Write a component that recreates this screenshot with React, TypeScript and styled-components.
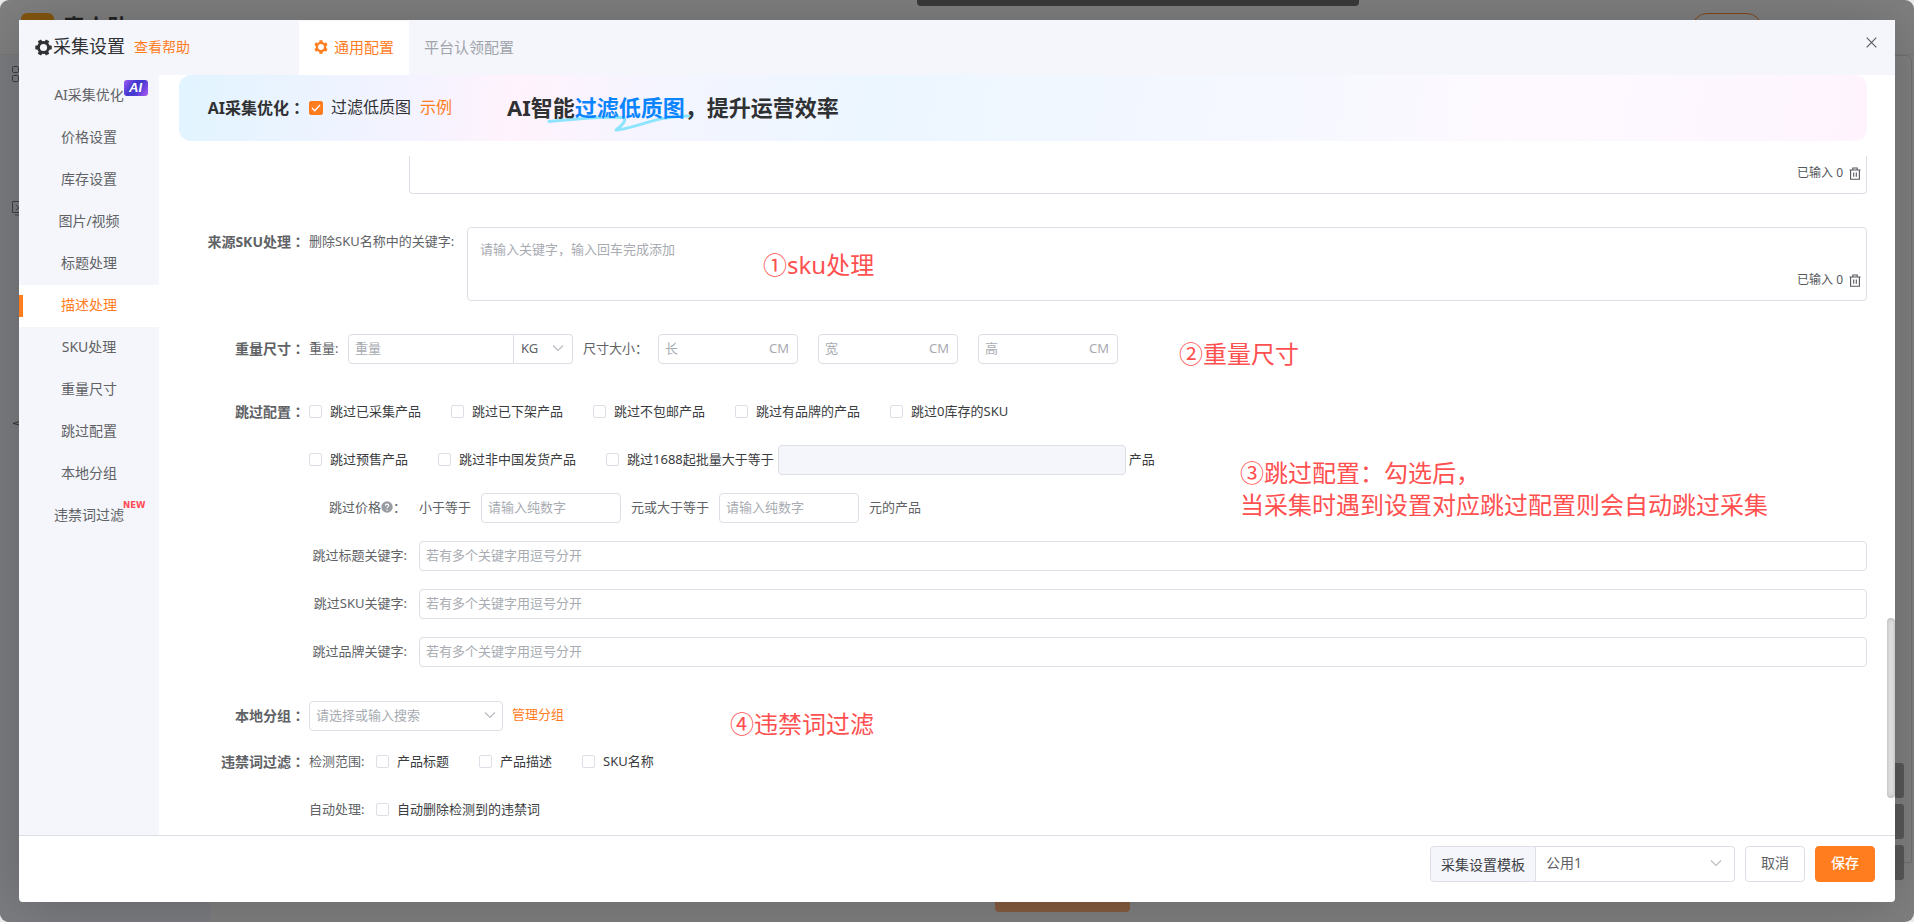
import React from "react";
import styled, { createGlobalStyle, css } from "styled-components";

const orange = "#ff7d1f";
const line = "#dcdfe6";
const pale = "#f5f6fb";
const muted = "#a8abb2";

const GlobalStyle = createGlobalStyle`
  *, *::before, *::after { box-sizing: border-box; }
  html, body, #root { height: 100%; }
  body {
    margin: 0;
    overflow: hidden;
    background: #e9e9e9;
    color: #606266;
    font: 13px/20px "Noto Sans", "Noto Sans CJK SC", sans-serif;
    white-space: nowrap;
  }
`;

/* dimmed page below the dialog */

const Page = styled.div`
  position: relative;
  height: 100%;
  border-radius: 9px;
  overflow: hidden;
  background: #7f7f7f;
  display: flex;
  flex-direction: column;
`;

const PageHeader = styled.header`
  height: 55px;
  display: flex;
  align-items: flex-start;
  padding: 13px 152px 0 21px;
  border-bottom: 1px solid #787878;
`;

const PageLogo = styled.div`
  width: 33px;
  height: 33px;
  border-radius: 6px;
  background: #84560f;
`;

const PageName = styled.b`
  margin-left: 9px;
  font-size: 22px;
  line-height: 26px;
  color: #222;
`;

const PageNav = styled.span`
  margin-left: 49px;
  display: flex;
  gap: 32px;
  font-size: 16px;
  line-height: 26px;
  padding-top: 2px;
  color: #333;
`;

const PagePill = styled.span`
  margin-left: auto;
  width: 70px;
  height: 30px;
  border: 1px solid #854618;
  border-radius: 15px;
`;

const PageBody = styled.div`
  flex: 1;
  display: flex;
`;

const PageAside = styled.aside`
  width: 210px;
  background: #7b7c7f;
  padding: 11px 0 0 12px;
  display: flex;
  flex-direction: column;
  align-items: flex-start;
`;

const PageGlyph = styled.svg<{ $gap?: number }>`
  display: block;
  margin-top: ${(p) => p.$gap ?? 0}px;
`;

const PageMain = styled.main`
  flex: 1;
  height: 808px;
  margin-right: 2px;
  border: 1px solid #717174;
  border-top-right-radius: 6px;
`;

const TopToast = styled.div`
  position: absolute;
  top: 0;
  left: 917px;
  width: 442px;
  height: 6px;
  border-radius: 0 0 4px 4px;
  background: #3a3a3a;
`;

const BottomAction = styled.div`
  position: absolute;
  bottom: 10px;
  left: 995px;
  width: 135px;
  height: 30px;
  border-radius: 4px;
  background: #845c3f;
`;

const SideTools = styled.div`
  position: absolute;
  right: 10px;
  bottom: 42px;
  display: flex;
  flex-direction: column;
  gap: 6px;
`;

const SideTool = styled.span`
  width: 35px;
  height: 35px;
  border-radius: 3px;
  background: #585858;
`;

/* dialog */

const Dialog = styled.section`
  position: absolute;
  inset: 20px 19px 20px 19px;
  display: flex;
  flex-direction: column;
  overflow: hidden;
  background: #fff;
  border-radius: 0 0 4px 4px;
`;

const DialogShadow = styled.div`
  position: absolute;
  inset: 20px 19px 20px 19px;
  box-shadow: 0 2px 50px rgba(0, 0, 0, 0.2);
`;

const DialogHeader = styled.header`
  height: 55px;
  flex: none;
  display: flex;
  background: ${pale};
`;

const TitleBlock = styled.div`
  width: 280px;
  padding-left: 16px;
  display: flex;
  align-items: center;
`;

const Title = styled.h1`
  margin: 0 9px 0 1px;
  font-size: 18px;
  font-weight: 400;
  line-height: 26px;
  padding-bottom: 3px;
  color: #303133;
`;

const Link = styled.a<{ $size?: number }>`
  color: ${orange};
  font-size: ${(p) => p.$size ?? 13}px;
  padding-bottom: 2px;
`;

const Tab = styled.div<{ $active?: boolean }>`
  display: flex;
  align-items: center;
  gap: 6px;
  margin-top: 1px;
  font-size: 15px;
  color: #a0a3aa;
  padding: 0 15px 2px;
  ${(p) => p.$active && css`background: #fff; color: ${orange};`}
`;

const CloseIcon = styled.svg`
  margin: 17px 18px 0 auto;
`;

const DialogBody = styled.div`
  flex: 1;
  min-height: 0;
  display: flex;
`;

const Menu = styled.nav`
  width: 140px;
  background: ${pale};
`;

const MenuItem = styled.div<{ $active?: boolean }>`
  position: relative;
  height: 42px;
  padding-bottom: 2px;
  display: flex;
  align-items: center;
  justify-content: center;
  font-size: 14px;
  ${(p) =>
    p.$active &&
    css`
      background: #fff;
      color: ${orange};
      &::before {
        content: "";
        position: absolute;
        left: 0;
        top: 10px;
        width: 4px;
        height: 22px;
        background: ${orange};
      }
    `}
`;

const AiBadge = styled.span`
  position: absolute;
  left: 105px;
  top: 5px;
  width: 24px;
  height: 16px;
  padding-right: 1px;
  border-radius: 3px;
  background: linear-gradient(125deg, #a35bf5 0%, #4338cf 38%, #4a3bd3 60%, #b05cf6 100%);
  color: #fff;
  font: italic 700 13px/16px "Liberation Sans", sans-serif;
  text-align: center;
`;

const NewBadge = styled.span`
  position: absolute;
  left: 104px;
  top: 5px;
  color: #ff4d58;
  font: 700 8.6px/10px "DejaVu Sans", sans-serif;
`;

const Content = styled.div`
  position: relative;
  flex: 1;
  padding: 0 28px 0 20px;
  display: flex;
  flex-direction: column;
  overflow: hidden;
`;

const Banner = styled.div`
  height: 66px;
  flex: none;
  display: flex;
  align-items: center;
  border-radius: 12px;
  background: linear-gradient(
    98deg,
    #e1f4ff 0%,
    #f4f3ff 14%,
    #fff3fd 20%,
    #f4f5ff 29%,
    #ecf6ff 41%,
    #f7f8ff 68%,
    #fef9ff 79%,
    #fdf6ff 92%,
    #fff4fe 100%
  );
  font-size: 16px;
  color: #303133;
`;

const Label = styled.div<{ $strong?: boolean }>`
  width: 126px;
  margin-right: 4px;
  padding-bottom: 2px;
  flex: none;
  text-align: right;
  font-weight: 700;
  font-size: ${(p) => (p.$strong ? 16 : 14)}px;
  color: ${(p) => (p.$strong ? "#303133" : "#606266")};
  &::after {
    content: "：";
    font-family: "Noto Sans CJK TC", sans-serif;
  }
`;

const BannerOption = styled.span`
  margin: 0 9px 0 8px;
  padding-bottom: 2px;
`;

const Slogan = styled.div`
  position: relative;
  margin-left: 55px;
  padding-bottom: 2px;
  font-size: 22px;
  line-height: 30px;
  font-weight: 700;
`;

const SloganText = styled.span`
  position: relative;
  em {
    font-style: normal;
    color: #0a85ff;
  }
`;

const Swoosh = styled.svg`
  position: absolute;
  left: 39px;
  top: 21px;
`;

const Scroller = styled.div`
  flex: 1;
  min-height: 0;
  margin-top: 15px;
  overflow: hidden;
`;

const Row = styled.div<{ $top?: number; $indent?: number; $h?: number; $start?: boolean }>`
  display: flex;
  align-items: ${(p) => (p.$start ? "flex-start" : "center")};
  min-height: ${(p) => p.$h ?? 30}px;
  margin-top: ${(p) => p.$top ?? 18}px;
  padding-left: ${(p) => p.$indent ?? 0}px;
`;

const Text = styled.span<{ $l?: number; $w?: number; $dark?: boolean; $end?: boolean }>`
  display: inline-flex;
  align-items: center;
  flex: none;
  padding-bottom: 2px;
  margin-left: ${(p) => p.$l ?? 0}px;
  width: ${(p) => (p.$w ? `${p.$w}px` : "auto")};
  justify-content: ${(p) => (p.$end ? "flex-end" : "flex-start")};
  color: ${(p) => (p.$dark ? "#3a3c40" : "#606266")};
`;

const KeywordLabels = styled.div`
  display: flex;
  height: 30px;
  align-items: center;
`;

const TagBox = styled.div<{ $clipped?: boolean }>`
  flex: 1;
  height: ${(p) => (p.$clipped ? 38 : 74)}px;
  display: flex;
  justify-content: space-between;
  align-items: flex-end;
  padding: 11px 5px 10px 12px;
  border: 1px solid ${line};
  border-radius: 4px;
  ${(p) => p.$clipped && css`border-top: 0; border-radius: 0 0 4px 4px;`}
`;

const Placeholder = styled.span<{ $start?: boolean }>`
  color: ${muted};
  ${(p) => p.$start && css`align-self: flex-start;`}
`;

const Counter = styled.span`
  display: flex;
  align-items: center;
  gap: 6px;
  font-size: 12px;
  color: #55575c;
`;

const Field = styled.div<{ $w?: number; $l?: number; $disabled?: boolean }>`
  height: 30px;
  ${(p) => (p.$w ? css`width: ${p.$w}px;` : css`flex: 1;`)}
  margin-left: ${(p) => p.$l ?? 0}px;
  padding: 0 6px 2px;
  display: flex;
  align-items: center;
  justify-content: space-between;
  border: 1px solid ${line};
  border-radius: 4px;
  background: ${(p) => (p.$disabled ? pale : "#fff")};
  color: ${muted};
`;

const Suffix = styled.span`
  margin-right: 2px;
`;

const WeightGroup = styled.div`
  display: flex;
  margin-left: 10px;
  & > :first-child { border-radius: 4px 0 0 4px; }
`;

const UnitSelect = styled.div`
  width: 59px;
  height: 30px;
  padding: 0 8px 2px 7px;
  display: flex;
  align-items: center;
  justify-content: space-between;
  border: 1px solid ${line};
  border-left: 0;
  border-radius: 0 4px 4px 0;
`;

const CheckLabel = styled.label<{ $last?: boolean }>`
  display: inline-flex;
  align-items: center;
  gap: 8px;
  flex: none;
  padding-bottom: 2px;
  margin-right: ${(p) => (p.$last ? 0 : 30)}px;
  color: #3a3c40;
`;

const Box = styled.span<{ $checked?: boolean }>`
  width: ${(p) => (p.$checked ? 14 : 13)}px;
  height: ${(p) => (p.$checked ? 14 : 13)}px;
  border: 1px solid ${(p) => (p.$checked ? orange : line)};
  border-radius: 2px;
  background: ${(p) => (p.$checked ? orange : "#fff")};
  display: flex;
  align-items: center;
  justify-content: center;
`;

const Note = styled.div<{ $x: number; $y: number }>`
  position: absolute;
  left: ${(p) => p.$x}px;
  top: ${(p) => p.$y}px;
  font-size: 24px;
  line-height: 32px;
  color: #ff5050;
  white-space: pre;
`;

const Circled = styled.span`
  font-family: "Noto Sans CJK SC", sans-serif;
`;

const Thumb = styled.div`
  position: absolute;
  right: 0;
  top: 543px;
  width: 8px;
  height: 180px;
  border-radius: 4px;
  background: #e4e4e4;
  box-shadow: inset 0 0 5px rgba(0, 0, 0, 0.25);
`;

const Footer = styled.footer`
  height: 67px;
  flex: none;
  display: flex;
  justify-content: flex-end;
  padding: 10px 20px 0 0;
  border-top: 1px solid ${line};
  font-size: 14px;
`;

const TemplateLabel = styled.div`
  width: 106px;
  height: 36px;
  line-height: 35px;
  text-align: center;
  border: 1px solid ${line};
  border-radius: 4px 0 0 4px;
  background: ${pale};
  color: #404246;
`;

const TemplateSelect = styled.div`
  width: 199px;
  height: 36px;
  padding: 0 12px 2px 10px;
  display: flex;
  align-items: center;
  justify-content: space-between;
  border: 1px solid ${line};
  border-left: 0;
  border-radius: 0 4px 4px 0;
`;

const Button = styled.button<{ $primary?: boolean }>`
  width: 60px;
  height: 36px;
  margin-left: 10px;
  padding: 0 0 2px;
  border: 1px solid ${(p) => (p.$primary ? orange : line)};
  border-radius: 4px;
  background: ${(p) => (p.$primary ? orange : "#fff")};
  color: ${(p) => (p.$primary ? "#fff" : "#606266")};
  font: inherit;
  font-weight: ${(p) => (p.$primary ? 500 : 400)};
`;

const GearIcon = ({ size, color, turn = 0 }: { size: number; color: string; turn?: number }) => (
  <svg width={size} height={size} viewBox="-9 -9 18 18" fill={color}>
    <g transform={`rotate(${turn})`}>
      {[0, 60, 120, 180, 240, 300].map((a) => (
        <rect key={a} x="5" y="-2.1" width="3.7" height="4.2" rx="0.6" transform={`rotate(${a})`} />
      ))}
    </g>
    <circle r="5.3" fill="none" stroke={color} strokeWidth="3" />
  </svg>
);

const Chevron = () => (
  <svg width="12" height="8" viewBox="0 0 12 8" fill="none" stroke="#b8bbc2" strokeWidth="1.1">
    <path d="M1 1.5 6 6.5 11 1.5" />
  </svg>
);

const TrashIcon = () => (
  <svg width="12" height="13" viewBox="0 0 12 13" fill="none" stroke="#55575c" strokeWidth="1.1">
    <path d="M.5 3h11M3.8 2.8V1h4.4v1.8M1.6 3v9.3h8.8V3M4.7 5.6v4.2M7.3 5.6v4.2" />
  </svg>
);

const HelpIcon = () => (
  <svg width="12" height="12" viewBox="0 0 12 12">
    <circle cx="6" cy="6" r="5.7" fill="#9a9ca3" />
    <path d="M4.4 4.7c0-2.2 3.3-2.1 3.3-.1C7.7 5.8 6 5.9 6 7.3" fill="none" stroke="#fff" strokeWidth="1.1" />
    <circle cx="6" cy="9" r=".7" fill="#fff" />
  </svg>
);

const Check = ({ text, last }: { text: string; last?: boolean }) => (
  <CheckLabel $last={last}>
    <Box />
    {text}
  </CheckLabel>
);

const EnteredCount = () => (
  <Counter>
    已输入 0
    <TrashIcon />
  </Counter>
);

const menu = [
  "AI采集优化", "价格设置", "库存设置", "图片/视频", "标题处理", "描述处理",
  "SKU处理", "重量尺寸", "跳过配置", "本地分组", "违禁词过滤",
];

export default function App() {
  return (
    <>
      <GlobalStyle />
      <Page>
        <PageHeader>
          <PageLogo />
          <PageName>麦小助</PageName>
          <PageNav>
            <span>国</span>
            <span>竹</span>
          </PageNav>
          <PagePill />
        </PageHeader>
        <PageBody>
          <PageAside>
            <PageGlyph width="18" height="18" fill="none" stroke="#3c3d42">
              <rect x=".5" y=".5" width="6" height="6" rx="1" />
              <rect x=".5" y="9.5" width="6" height="6" rx="1" />
              <rect x="9.5" y=".5" width="6" height="6" rx="1" />
            </PageGlyph>
            <PageGlyph $gap={116} width="18" height="18" fill="none" stroke="#3f4046">
              <path d="M.5 1.5h16v11H.5zM3 15h11" />
              <path d="m4 5 3 3-3 2" />
            </PageGlyph>
            <PageGlyph $gap={200} width="18" height="12" fill="none" stroke="#333">
              <path d="M13 2 1 5.5 13 8" />
            </PageGlyph>
          </PageAside>
          <PageMain />
        </PageBody>
        <TopToast />
        <BottomAction />
        <SideTools>
          <SideTool />
          <SideTool />
          <SideTool />
        </SideTools>

        <DialogShadow />
        <Dialog>
          <DialogHeader>
            <TitleBlock>
              <GearIcon size={17} color="#303133" />
              <Title>采集设置</Title>
              <Link $size={14}>查看帮助</Link>
            </TitleBlock>
            <Tab $active>
              <GearIcon size={14} color={orange} turn={30} />
              通用配置
            </Tab>
            <Tab>平台认领配置</Tab>
            <CloseIcon width="11" height="11" viewBox="0 0 11 11" stroke="#55575c" strokeWidth="1.1">
              <path d="m.7.7 9.6 9.6M10.3.7.7 10.3" />
            </CloseIcon>
          </DialogHeader>

          <DialogBody>
            <Menu>
              {menu.map((name, i) => (
                <MenuItem key={name} $active={i === 5}>
                  {name}
                  {i === 0 && <AiBadge>AI</AiBadge>}
                  {i === menu.length - 1 && <NewBadge>NEW</NewBadge>}
                </MenuItem>
              ))}
            </Menu>

            <Content>
              <Banner>
                <Label $strong>AI采集优化</Label>
                <Box $checked>
                  <svg width="10" height="8" viewBox="0 0 10 8" fill="none" stroke="#fff" strokeWidth="1.3">
                    <path d="m1 4 2.8 2.8L9 1" />
                  </svg>
                </Box>
                <BannerOption>过滤低质图</BannerOption>
                <Link $size={16}>示例</Link>
                <Slogan>
                  <Swoosh width="150" height="22" fill="none" stroke="#8ce4ff" strokeWidth="3" strokeLinecap="round" strokeLinejoin="round">
                    <path d="M3 8.5C28 6 60 3.500 76 4.500c7 1-1 9-6 12.500 16 0 40-15 75-14" />
                  </Swoosh>
                  <SloganText>
                    AI智能<em>过滤低质图</em>，提升运营效率
                  </SloganText>
                </Slogan>
              </Banner>

              <Scroller>
                <Row $top={0} $indent={230} $start>
                  <TagBox $clipped>
                    <span />
                    <EnteredCount />
                  </TagBox>
                </Row>

                <Row $top={33} $start>
                  <KeywordLabels>
                    <Label>来源SKU处理</Label>
                    <Text $w={158}>删除SKU名称中的关键字:</Text>
                  </KeywordLabels>
                  <TagBox>
                    <Placeholder $start>请输入关键字，输入回车完成添加</Placeholder>
                    <EnteredCount />
                  </TagBox>
                </Row>

                <Row $top={33}>
                  <Label>重量尺寸</Label>
                  <Text $w={29}>重量:</Text>
                  <WeightGroup>
                    <Field $w={166}>重量</Field>
                    <UnitSelect>
                      KG
                      <Chevron />
                    </UnitSelect>
                  </WeightGroup>
                  <Text $l={10} $w={75}>尺寸大小：</Text>
                  <Field $w={140}>长<Suffix>CM</Suffix></Field>
                  <Field $w={140} $l={20}>宽<Suffix>CM</Suffix></Field>
                  <Field $w={140} $l={20}>高<Suffix>CM</Suffix></Field>
                </Row>

                <Row $top={33}>
                  <Label>跳过配置</Label>
                  <Check text="跳过已采集产品" />
                  <Check text="跳过已下架产品" />
                  <Check text="跳过不包邮产品" />
                  <Check text="跳过有品牌的产品" />
                  <Check text="跳过0库存的SKU" last />
                </Row>
                <Row $indent={130}>
                  <Check text="跳过预售产品" />
                  <Check text="跳过非中国发货产品" />
                  <Check text="跳过1688起批量大于等于" last />
                  <Field $w={348} $l={4} $disabled />
                  <Text $l={3} $dark>产品</Text>
                </Row>
                <Row $indent={150}>
                  <Text $w={90}>跳过价格<HelpIcon />：</Text>
                  <Text $w={62}>小于等于</Text>
                  <Field $w={140}>请输入纯数字</Field>
                  <Text $l={10} $w={88}>元或大于等于</Text>
                  <Field $w={140}>请输入纯数字</Field>
                  <Text $l={10}>元的产品</Text>
                </Row>
                {["跳过标题关键字:", "跳过SKU关键字:", "跳过品牌关键字:"].map((t) => (
                  <Row key={t}>
                    <Text $w={228} $end>{t}</Text>
                    <Field $l={12}>若有多个关键字用逗号分开</Field>
                  </Row>
                ))}

                <Row $top={34}>
                  <Label>本地分组</Label>
                  <Field $w={194}>请选择或输入搜索<Chevron /></Field>
                  <Text $l={9}><Link>管理分组</Link></Text>
                </Row>
                <Row $top={15} $h={32}>
                  <Label>违禁词过滤</Label>
                  <Text $w={67}>检测范围:</Text>
                  <Check text="产品标题" />
                  <Check text="产品描述" />
                  <Check text="SKU名称" last />
                </Row>
                <Row $top={16} $h={32} $indent={130}>
                  <Text $w={67}>自动处理:</Text>
                  <Check text="自动删除检测到的违禁词" last />
                </Row>
              </Scroller>

              <Note $x={604} $y={173}><Circled>①</Circled>sku处理</Note>
              <Note $x={1020} $y={262}><Circled>②</Circled>重量尺寸</Note>
              <Note $x={1081} $y={381}>
                <Circled>③</Circled>跳过配置：勾选后，{"\n"}当采集时遇到设置对应跳过配置则会自动跳过采集
              </Note>
              <Note $x={571} $y={632}><Circled>④</Circled>违禁词过滤</Note>
              <Thumb />
            </Content>
          </DialogBody>

          <Footer>
            <TemplateLabel>采集设置模板</TemplateLabel>
            <TemplateSelect>
              公用1
              <Chevron />
            </TemplateSelect>
            <Button>取消</Button>
            <Button $primary>保存</Button>
          </Footer>
        </Dialog>
      </Page>
    </>
  );
}
